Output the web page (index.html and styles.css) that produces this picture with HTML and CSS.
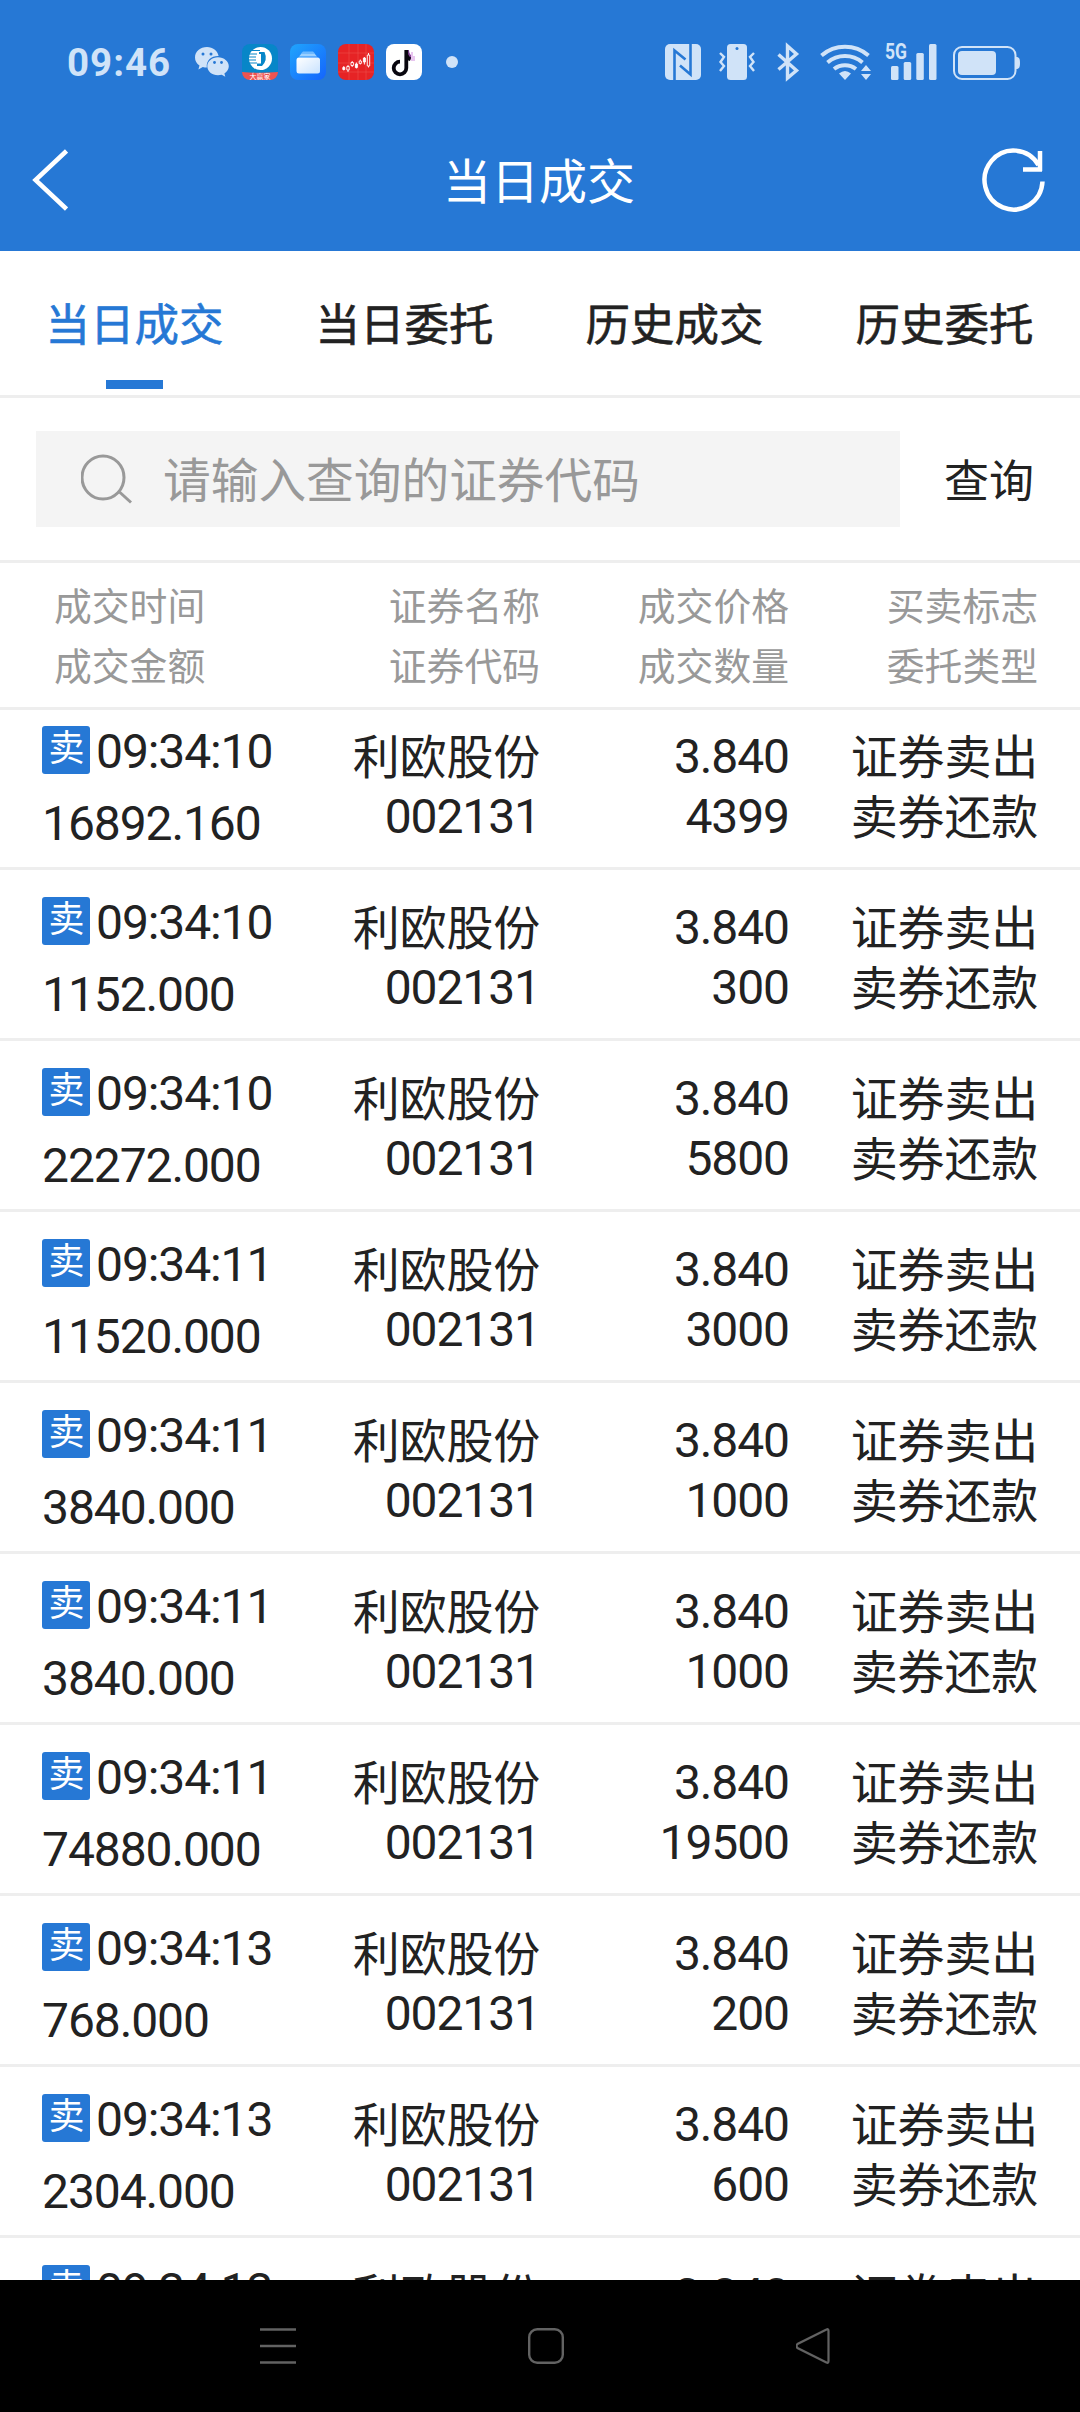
FILE: index.html
```html
<!DOCTYPE html>
<html lang="zh-CN">
<head>
<meta charset="utf-8">
<title>当日成交</title>
<link rel="stylesheet" href="styles.css">
</head>
<body>
<div class="screen">
  <div class="status">
    <span class="clock">09:46</span>
    <div class="notices">
      <svg class="wechat" width="34" height="30" viewBox="0 0 34 30"><path fill="#d0e3f8" d="M12 0C5.300 0 0 4.600 0 10.400c0 3.300 1.700 6.100 4.500 8l-1.100 4 4.400-2.500c1.200.35 2.600.5 4 .5C11 13 16.500 8.700 23.600 8.900 22.500 3.700 17.800 0 12 0z"/><path fill="#d0e3f8" d="M23 10.300c-6 0-10.700 4-10.700 9s4.700 9 10.700 9c1.300 0 2.500-.2 3.700-.5l3.600 2-.9-3.300c2.700-1.700 4.400-4.300 4.400-7.200 0-5-4.800-9-10.800-9z"/><g fill="#2678d5"><circle cx="8" cy="7" r="1.500"/><circle cx="16" cy="7" r="1.500"/><circle cx="19.500" cy="15.500" r="1.400"/><circle cx="26.500" cy="15.500" r="1.400"/></g></svg>
      <svg width="36" height="36" viewBox="0 0 36 36"><defs><clipPath id="r"><rect width="36" height="36" rx="8"/></clipPath></defs><g clip-path="url(#r)"><rect width="36" height="36" fill="#0786c8"/><circle cx="18.500" cy="14.500" r="11.500" fill="#fff"/><path d="M17 8h5.500q3.500 8-2.500 14h-5v-2.500h4V10H17z" fill="#0786c8"/><path d="M6 10h9M6 13h8M6 16h8M6 19h9M9 6.500h9" stroke="#0786c8" stroke-width="1.200"/><path d="M0 28q18 1.500 36 0v8H0z" fill="#ee5350"/></g><text x="18" y="34.500" text-anchor="middle" class="tiny">大赢家</text></svg>
      <svg width="36" height="36" viewBox="0 0 36 36"><defs><linearGradient id="b" x2="1" y2="1"><stop stop-color="#20a5fc"/><stop offset="1" stop-color="#1464fd"/></linearGradient><linearGradient id="w" x2="1" y2="1"><stop stop-color="#fff"/><stop offset="1" stop-color="#c8e2ff"/></linearGradient></defs><rect width="36" height="36" rx="8" fill="url(#b)"/><path d="M13 7.500h10l2 2H11z" fill="#6db9ff"/><path d="M11.500 9.500h13l2.500 3H9z" fill="#9bd0ff"/><rect x="6.500" y="13.500" width="23.500" height="16" rx="2.500" fill="url(#w)"/></svg>
      <svg width="36" height="36" viewBox="0 0 36 36"><rect width="36" height="36" rx="8" fill="#e62325"/><path d="M11 0v36M20 0v36M28 0v36M0 9h36M0 19h36M0 28h36" stroke="#ef5552" stroke-width=".5"/><g fill="#e62325" stroke="#fff" stroke-width=".9"><path d="M5.800 22v4.500M10 21v7M14.200 17v6M18.400 18.500v6M22.300 15.500v5M26.400 13v7.500M30.500 9v14.500"/><path fill="#fff" d="M4.800 23.500h2v2h-2zM17.400 20h2v3.500h-2zM25.400 14h2v4h-2z"/><path d="M8.800 22.500h2.400v3.500H8.800zM13 18.500h2.400v3H13zM21.200 17h2.200v2.400h-2.200zM29.300 11h2.400v11h-2.400z"/></g></svg>
      <svg width="36" height="36" viewBox="0 0 36 36"><rect width="36" height="36" rx="8" fill="#fff"/><path d="M19 6h4c.3 4 2 6.500 6 7v2.500h-6z" fill="#8e4aa0"/><path d="M25 8h2v4h2v5h-4z" fill="#e8c5ef"/><path d="M20.300 6v18a6.300 6.300 0 1 1-6.300-6.300M20.500 11c.8 2.500 2 3.600 4 4.200" fill="none" stroke="#09070f" stroke-width="3.800"/></svg>
    </div>
    <i class="dot"></i>
    <svg class="system" width="356" height="40" viewBox="664 42 356 40">
      <g fill="#d0e3f8">
        <rect x="665" y="44" width="36" height="36" rx="5"/>
        <path d="M674.500 80V50.500l11 9M690.500 44v30.500l-10.500-9" fill="none" stroke="#2678d5" stroke-width="2.600"/>
        <rect x="727" y="44" width="20" height="36" rx="3.500"/><circle cx="737" cy="48.500" r="1.500" fill="#2678d5"/>
        <path d="M720 53l4 4-3.500 5 3.500 4-4 5M754 53l-4 4 3.500 5-3.500 4 4 5" fill="none" stroke="#d0e3f8" stroke-width="2.400"/>
        <path d="M778.500 54.500l18 16-9 7.500V46l9 8-18 15.500" fill="none" stroke="#d0e3f8" stroke-width="3.400"/>
        <path d="M821.500 55.500a36 36 0 0 1 47 0M827.500 62.500a27 27 0 0 1 35 0M834 69a18 18 0 0 1 22 0" fill="none" stroke="#d0e3f8" stroke-width="4"/>
        <path d="M839 73.500q6-5 12 0l-6 6.500zM861 71l5-6 5 6zM861 74h10l-5 6z"/>
        <text class="fiveg" x="885" y="59" textLength="22" lengthAdjust="spacingAndGlyphs">5G</text>
        <rect x="891" y="66" width="7.500" height="14" rx="1.500"/><rect x="903.700" y="62" width="7.500" height="18" rx="1.500"/><rect x="916.300" y="53" width="7.500" height="27" rx="1.500"/><rect x="929" y="44" width="7.500" height="36" rx="1.500"/>
        <rect x="954" y="47" width="61.500" height="32" rx="8" fill="none" stroke="#d0e3f8" stroke-width="2"/><rect x="958" y="51" width="38" height="24" rx="4"/><path d="M1016 57c3 0 4 1.500 4 6s-1 6-4 6z"/>
      </g>
    </svg>
  </div>
  <header class="titlebar">
    <svg width="36" height="62" viewBox="0 0 36 62"><path d="M34.500 2L3.500 31l31 29" fill="none" stroke="#fff" stroke-width="4.500"/></svg>
    <h1>当日成交</h1>
    <svg width="64" height="64" viewBox="0 0 64 64"><path d="M60.500 33.500a29 29.500 0 1 1-4-16.500M41 21.500h19M58 3v20" fill="none" stroke="#fff" stroke-width="4.500"/></svg>
  </header>
  <nav class="tabs">
    <span class="tab active">当日成交</span><span class="tab">当日委托</span><span class="tab">历史成交</span><span class="tab">历史委托</span>
  </nav>
  <div class="search">
    <div class="field">
      <svg width="52" height="50" viewBox="0 0 52 50"><g fill="none" stroke="#999" stroke-width="3"><ellipse cx="22" cy="23.500" rx="21" ry="21.500"/><path d="M38.500 38L50 48.500"/></g></svg>
      <span>请输入查询的证券代码</span>
    </div>
    <span class="query">查询</span>
  </div>
  <div class="thead">
    <div>成交时间<br>成交金额</div><div>证券名称<br>证券代码</div><div>成交价格<br>成交数量</div><div>买卖标志<br>委托类型</div>
  </div>
  <main class="list">
    <div class="row"><div class="first"><p><b>卖</b>09:34:10</p><p>16892.160</p></div><div class="cn">利欧股份</div><div>3.840</div><div class="cn">证券卖出</div><div>002131</div><div>4399</div><div class="cn">卖券还款</div></div>
    <div class="row"><div class="first"><p><b>卖</b>09:34:10</p><p>1152.000</p></div><div class="cn">利欧股份</div><div>3.840</div><div class="cn">证券卖出</div><div>002131</div><div>300</div><div class="cn">卖券还款</div></div>
    <div class="row"><div class="first"><p><b>卖</b>09:34:10</p><p>22272.000</p></div><div class="cn">利欧股份</div><div>3.840</div><div class="cn">证券卖出</div><div>002131</div><div>5800</div><div class="cn">卖券还款</div></div>
    <div class="row"><div class="first"><p><b>卖</b>09:34:11</p><p>11520.000</p></div><div class="cn">利欧股份</div><div>3.840</div><div class="cn">证券卖出</div><div>002131</div><div>3000</div><div class="cn">卖券还款</div></div>
    <div class="row"><div class="first"><p><b>卖</b>09:34:11</p><p>3840.000</p></div><div class="cn">利欧股份</div><div>3.840</div><div class="cn">证券卖出</div><div>002131</div><div>1000</div><div class="cn">卖券还款</div></div>
    <div class="row"><div class="first"><p><b>卖</b>09:34:11</p><p>3840.000</p></div><div class="cn">利欧股份</div><div>3.840</div><div class="cn">证券卖出</div><div>002131</div><div>1000</div><div class="cn">卖券还款</div></div>
    <div class="row"><div class="first"><p><b>卖</b>09:34:11</p><p>74880.000</p></div><div class="cn">利欧股份</div><div>3.840</div><div class="cn">证券卖出</div><div>002131</div><div>19500</div><div class="cn">卖券还款</div></div>
    <div class="row"><div class="first"><p><b>卖</b>09:34:13</p><p>768.000</p></div><div class="cn">利欧股份</div><div>3.840</div><div class="cn">证券卖出</div><div>002131</div><div>200</div><div class="cn">卖券还款</div></div>
    <div class="row"><div class="first"><p><b>卖</b>09:34:13</p><p>2304.000</p></div><div class="cn">利欧股份</div><div>3.840</div><div class="cn">证券卖出</div><div>002131</div><div>600</div><div class="cn">卖券还款</div></div>
    <div class="row"><div class="first"><p><b>卖</b>09:34:13</p></div><div class="cn">利欧股份</div><div>3.840</div><div class="cn">证券卖出</div></div>
  </main>
  <footer class="sysnav">
    <svg width="36" height="38" viewBox="0 0 36 38"><path d="M0 2.500h36M0 19h36M0 35.500h36" stroke="#626262" stroke-width="2.600"/></svg>
    <svg width="36" height="38" viewBox="0 0 36 38"><rect x="1.200" y="2.200" width="33.600" height="33.600" rx="8" fill="none" stroke="#626262" stroke-width="2.400"/></svg>
    <svg width="36" height="38" viewBox="0 0 36 38"><path d="M30.500 2.500Q32.500 1.500 32.500 4v30q0 2.500-2 1.500L1.500 21q-2-2 0-4z" fill="none" stroke="#626262" stroke-width="2.200"/></svg>
  </footer>
</div>
</body>
</html>
```
FILE: styles.css
```css
* { box-sizing: border-box; }
body { margin: 0; }
h1, p { margin: 0; font-weight: 400; }
svg { display: block; flex: none; }

.screen {
  width: 1080px;
  height: 2412px;
  display: flex;
  flex-direction: column;
  overflow: hidden;
  background: #fff;
  color: #222;
  font-family: Roboto, "Noto Sans CJK SC", sans-serif;
}

/* phone status bar */
.status {
  height: 110px;
  flex: none;
  display: flex;
  align-items: center;
  padding: 14px 60px 0 67px;
  background: #2678d5;
}
.clock {
  width: 128px;
  font-size: 38.500px;
  font-weight: 700;
  letter-spacing: 1px;
  color: #d0e3f8;
}
.notices { display: flex; align-items: center; gap: 12px; }
.wechat { margin-right: 1px; }
.dot { width: 12px; height: 12px; margin-left: 24px; border-radius: 50%; background: #d0e3f8; }
.system { margin-left: auto; overflow: visible; }
.tiny { font-size: 7px; fill: #fff; }
.fiveg { font-size: 22px; font-weight: 700; }

/* page title */
.titlebar {
  height: 141px;
  flex: none;
  display: flex;
  align-items: center;
  justify-content: space-between;
  padding: 0 34px 2px 32px;
  background: #2678d5;
  color: #fff;
}
.titlebar h1 { font-size: 48px; padding: 0 0 3px 28px; }

.tabs {
  height: 147px;
  flex: none;
  display: grid;
  grid-template-columns: repeat(4, 1fr);
  border-bottom: 3px solid #eee;
}
.tab {
  display: flex;
  flex-direction: column;
  align-items: center;
  font-size: 44.500px;
  line-height: 150px;
  height: 144px;
  margin-left: -1px;
  -webkit-text-stroke: 0.6px currentColor;
}
.active { color: #2678d5; }
.active::after { content: ""; width: 57px; height: 9px; flex: none; margin-top: -21px; background: #2678d5; }

.search {
  height: 165px;
  flex: none;
  display: flex;
  align-items: center;
  padding: 0 46px 0 36px;
  border-bottom: 3px solid #eee;
}
.field {
  width: 864px;
  height: 96px;
  display: flex;
  align-items: center;
  gap: 30px;
  padding-left: 45px;
  background: #f4f4f4;
  color: #999;
  font-size: 47.700px;
}
.field span { padding-bottom: 4px; }
.query { margin-left: auto; padding-bottom: 2px; font-size: 45px; }

.thead, .row {
  display: grid;
  grid-template-columns: repeat(4, 249px);
  padding: 0 42px;
  text-align: right;
  line-height: 60px;
  border-bottom: 3px solid #eee;
}
.thead {
  height: 147px;
  flex: none;
  padding-top: 14px;
  font-size: 37.800px;
  color: #999;
}
.thead div:first-child { padding-left: 12px; text-align: left; }

/* the list is scrolled slightly under its heading */
.list { flex: 1; min-height: 0; overflow: hidden; }
.row {
  height: 171px;
  padding-top: 28px;
  grid-template-rows: 60px 60px;
  font-size: 48px;
  letter-spacing: -1.100px;
}
.row:first-child { margin-top: -11px; }
.cn { font-size: 47px; letter-spacing: -0.200px; padding-top: 1px; }
.first { grid-row: 1 / 3; text-align: left; line-height: 73px; margin-top: -12px; }
.first p { display: flex; align-items: center; height: 73px; }
.first p + p { height: 71px; }
.first b {
  width: 48px;
  height: 48px;
  margin: -3px 6px 0 0;
  border-radius: 3px;
  background: #2678d5;
  color: #fff;
  font-size: 36px;
  font-weight: 400;
  line-height: 46px;
  text-align: center;
}

.sysnav {
  height: 132px;
  flex: none;
  display: flex;
  gap: 232px;
  padding: 47px 0 0 260px;
  background: #000;
}
```
